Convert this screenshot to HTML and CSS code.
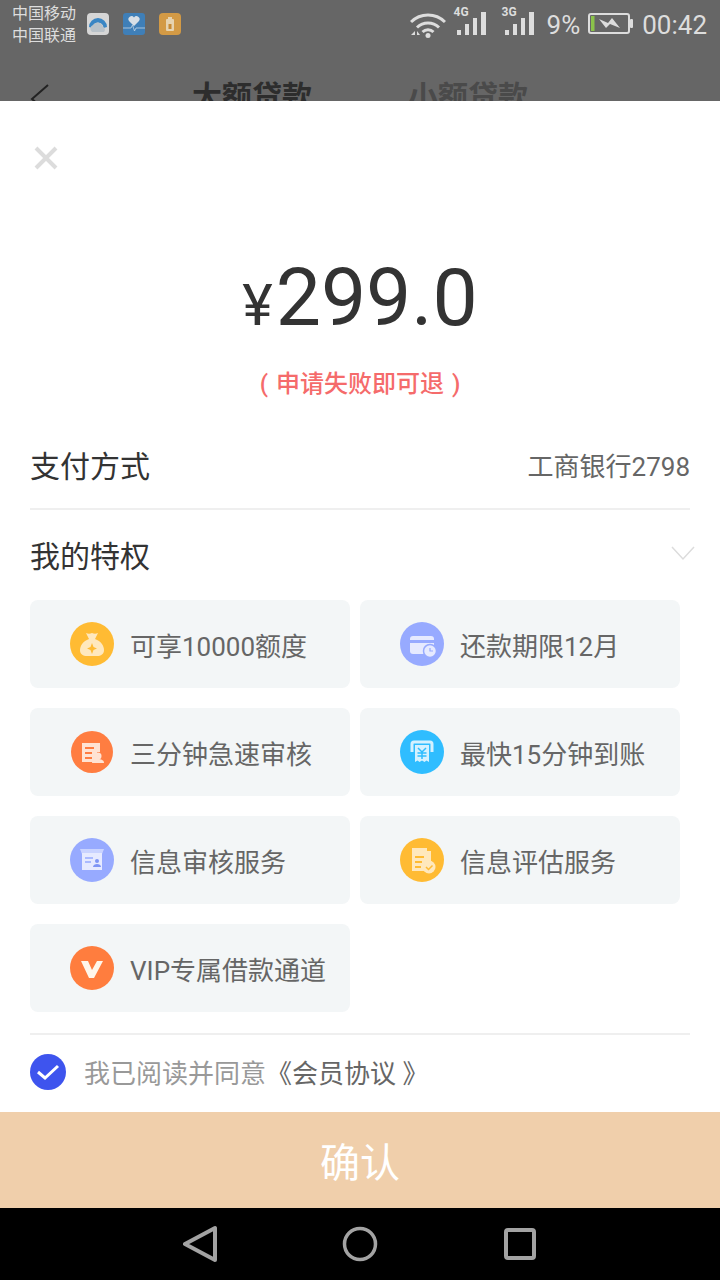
FILE: index.html
```html
<!DOCTYPE html>
<html>
<head>
<meta charset="utf-8">
<title>支付</title>
<link rel="stylesheet" href="styles.css">
</head>
<body>
<div class="container">

<header class="top">
  <div class="statusbar">
    <div class="carrier"><span>中国移动</span><span>中国联通</span></div>
    <div class="notify">
      <svg width="22" height="22" viewBox="0 0 22 22"><rect width="22" height="22" rx="4" fill="#d6d6d6"/><path d="M2 14a9 9 0 1 1 18 0l-3.500 1a5.500 5.500 0 1 0-11 0z" fill="#3a86c4"/><path d="M5 19a4 4 0 0 1 1-7 5.500 5.500 0 0 1 10 2 3 3 0 0 1 1 5z" fill="#b9c2c9"/></svg>
      <svg width="22" height="22" viewBox="0 0 22 22"><rect width="22" height="22" rx="3" fill="#3f7fb8"/><path d="M14 14L9 9a3 3 0 0 1 5-3.500A3 3 0 0 1 19 9z" fill="#d8dfe6" transform="translate(-3 -1)"/><path d="M0 15h8l1.500-3 2 6 1.500-3h9" fill="none" stroke="#c4d6e6" stroke-width="0.800"/></svg>
      <svg width="22" height="22" viewBox="0 0 22 22"><rect width="22" height="22" rx="4" fill="#d39a45"/><rect x="7" y="6" width="8" height="12" rx="1" fill="#e6d3b0"/><rect x="9" y="4" width="4" height="2" fill="#e6d3b0"/><rect x="9.500" y="11" width="3" height="5" fill="#c58a35"/></svg>
    </div>
    <div class="sysinfo">
      <svg class="wifi" width="36" height="26" viewBox="0 0 36 26" fill="none" stroke="#ddd" stroke-width="3"><path d="M1 10a24 24 0 0 1 34 0"/><path d="M7 15.500a16 16 0 0 1 22 0"/><path d="M12.500 20a8 8 0 0 1 11 0"/><circle cx="18" cy="23.500" r="2.500" fill="#ddd" stroke="none"/><path d="M1 23l4-4v4zM7 19l3 4h-3z" fill="#ddd" stroke="none"/></svg>
      <div class="signal"><small>4G</small><i class="b1"></i><i class="b2"></i><i class="b3"></i><i class="b4"></i></div>
      <div class="signal"><small>3G</small><i class="b1"></i><i class="b2"></i><i class="b3"></i><i class="b4"></i></div>
      <span class="pct">9%</span>
      <svg class="batt" width="45" height="21" viewBox="0 0 45 21"><rect x="1" y="1" width="40" height="19" rx="2" fill="none" stroke="#ddd" stroke-width="2"/><rect x="3" y="3" width="3.500" height="15" fill="#8bc34a"/><rect x="42" y="6" width="3" height="9" rx="1" fill="#ddd"/><path d="M11 6l9 4 4-5 8 10-10-4-4 4z" fill="#ddd"/></svg>
      <span class="clock">00:42</span>
    </div>
  </div>
  <div class="tabs">
    <svg class="back" width="20" height="40" viewBox="0 0 20 40"><path d="M18 1L2 15l16 14" fill="none" stroke="#222" stroke-width="2"/></svg>
    <span class="tab on">大额贷款</span>
    <span class="tab">小额贷款</span>
  </div>
</header>

<main class="sheet">
  <svg class="close" width="26" height="26" viewBox="0 0 26 26"><path d="M3 3l20 20M23 3L3 23" stroke="#dcdcdc" stroke-width="4" fill="none"/></svg>
  <div class="amount"><span class="yen">¥</span>299.0</div>
  <p class="refund">( 申请失败即可退 )</p>

  <div class="row pay">
    <span class="label">支付方式</span>
    <span class="value">工商银行2798</span>
  </div>
  <div class="row perks">
    <span class="label">我的特权</span>
    <svg width="24" height="15" viewBox="0 0 24 15"><path d="M1 1l11 12L23 1" fill="none" stroke="#dcdcdc" stroke-width="1.500"/></svg>
  </div>

  <div class="grid">
    <div class="card">
      <svg class="ico" viewBox="0 0 44 44"><circle cx="22" cy="22" r="22" fill="#ffbb33"/><path d="M16 11c2 1 4 1 6 0 2 1 4 1 6 0l-3 6c6 2 9 7 9 11 0 4-3 6-7 6H17c-4 0-7-2-7-6 0-4 3-9 9-11z" fill="#ffe8bd"/><path d="M22 21l1.500 4 3.500 1.500-3.500 1.500-1.500 4-1.500-4-3.500-1.500 3.500-1.500z" fill="#ffbb33"/></svg>
      <span>可享10000额度</span>
    </div>
    <div class="card">
      <svg class="ico" viewBox="0 0 44 44"><circle cx="22" cy="22" r="22" fill="#97aaff"/><rect x="10" y="14" width="24" height="18" rx="3" fill="#e6eaff"/><rect x="10" y="18" width="24" height="3" fill="#97aaff"/><circle cx="30" cy="29" r="6.500" fill="#e6eaff" stroke="#97aaff" stroke-width="1.500"/><path d="M30 26v3h3" fill="none" stroke="#97aaff" stroke-width="1.200"/></svg>
      <span>还款期限12月</span>
    </div>
    <div class="card">
      <svg class="ico" viewBox="0 0 44 44"><circle cx="22" cy="22" r="21" fill="#ff7d41"/><path d="M12 13h18v9h-3v10H12z" fill="#ffe3d3"/><path d="M15 18h9M15 23h7M15 28h7" stroke="#ff7d41" stroke-width="2"/><circle cx="28" cy="26" r="3.500" fill="#ffe3d3"/><path d="M22 33c0-3 3-4 6-4s6 1 6 4z" fill="#ffe3d3"/></svg>
      <span>三分钟急速审核</span>
    </div>
    <div class="card">
      <svg class="ico" viewBox="0 0 44 44"><circle cx="22" cy="22" r="22" fill="#2fbdff"/><path d="M12 22v-8a2 2 0 0 1 2-2h16a2 2 0 0 1 2 2v8" fill="none" stroke="#d5f1ff" stroke-width="3"/><path d="M15 15h14v17l-2.500-1.500-2 1.500-2.500-1.500-2.500 1.500-2-1.500-2.500 1.500z" fill="#d5f1ff"/><path d="M18 18l4 4 4-4M17.500 23h9M17.500 26h9M22 22v7" fill="none" stroke="#2fbdff" stroke-width="1.500"/></svg>
      <span>最快15分钟到账</span>
    </div>
    <div class="card">
      <svg class="ico" viewBox="0 0 44 44"><circle cx="22" cy="22" r="22" fill="#97aaff"/><path d="M10 11h24l-2 5H12z" fill="#c9d3ff"/><rect x="12" y="15" width="20" height="17" fill="#e6eaff"/><path d="M15 20h8M15 24h6" stroke="#97aaff" stroke-width="1.500"/><circle cx="27" cy="23" r="2" fill="#7f95f5"/><path d="M23 29c0-2 2-3 4-3s4 1 4 3z" fill="#7f95f5"/></svg>
      <span>信息审核服务</span>
    </div>
    <div class="card">
      <svg class="ico" viewBox="0 0 44 44"><circle cx="22" cy="22" r="22" fill="#ffbb33"/><path d="M12 10h15v3h4v10a7 7 0 0 0-6 10H12z" fill="#ffe8bd"/><path d="M15 19h9M15 24h7M15 29h6" stroke="#ffbb33" stroke-width="2"/><circle cx="29" cy="29" r="6.500" fill="#ffe8bd"/><path d="M26 29l2.500 2.500 4-4" fill="none" stroke="#ffbb33" stroke-width="1.500"/></svg>
      <span>信息评估服务</span>
    </div>
    <div class="card">
      <svg class="ico" viewBox="0 0 44 44"><circle cx="22" cy="22" r="22" fill="#ff7d3e"/><path d="M11 15h7l4 9 5-9h6L24 32h-5z" fill="#fff6ea"/></svg>
      <span>VIP专属借款通道</span>
    </div>
  </div>

  <div class="agree">
    <svg width="36" height="36" viewBox="0 0 36 36"><circle cx="18" cy="18" r="18" fill="#3e54ee"/><path d="M8 18l7 6 13-12" fill="none" stroke="#fff" stroke-width="3"/></svg>
    <span>我已阅读并同意<em>《会员协议 》</em></span>
  </div>
</main>

<button class="confirm">确认</button>

<nav class="navbar">
  <svg width="36" height="40" viewBox="0 0 36 40"><path d="M32 4v32L2 20z" fill="none" stroke="#a3a3a3" stroke-width="4" stroke-linejoin="round"/></svg>
  <svg width="36" height="36" viewBox="0 0 36 36"><circle cx="18" cy="18" r="15.500" fill="none" stroke="#a3a3a3" stroke-width="3.500"/></svg>
  <svg class="recent" width="32" height="32" viewBox="0 0 32 32"><rect x="2" y="2" width="28" height="28" rx="2" fill="none" stroke="#a3a3a3" stroke-width="4"/></svg>
</nav>

</div>
</body>
</html>
```

FILE: styles.css
```css
* {
	box-sizing: border-box;
}
body {
	margin: 0;
	font-family: Roboto, "Noto Sans CJK SC", sans-serif;
}
.container {
	width: 720px;
	height: 1280px;
	display: flex;
	flex-direction: column;
	overflow: hidden;
	background: #fff;
}

/* dimmed page behind the sheet */
.top {
	height: 101px;
	flex: none;
	overflow: hidden;
	background: #666;
}
.statusbar {
	height: 50px;
	display: flex;
	align-items: center;
	padding: 0 13px 0 12px;
	color: #ddd;
}
.carrier {
	display: flex;
	flex-direction: column;
	font-size: 16px;
	line-height: 22px;
	width: 75px;
}
.notify {
	display: flex;
	gap: 14px;
	margin-top: -2px;
}
.sysinfo {
	margin-left: auto;
	display: flex;
	align-items: center;
}
.signal {
	position: relative;
	width: 29px;
	height: 27px;
	margin: -7px 0 0 11px;
	display: flex;
	align-items: flex-end;
	gap: 4px;
}
.signal + .signal {
	margin-left: 19px;
}
.signal small {
	position: absolute;
	left: -3px;
	top: -3px;
	font-size: 12px;
	font-weight: 700;
}
.signal i {
	width: 4.25px;
	background: #ddd;
}
.b1 { height: 5px; }
.b2 { height: 11px; }
.b3 { height: 17px; }
.b4 { height: 23px; }
.pct {
	font-size: 26px;
	margin-left: 13px;
}
.batt {
	margin: -3px 0 0 8px;
}
.clock {
	font-size: 26px;
	margin-left: 9px;
}
.tabs {
	display: flex;
	align-items: flex-start;
	padding: 27px 0 0 30px;
}
.back {
	margin-top: 7px;
}
.tab {
	font-size: 30px;
	line-height: 40px;
	font-weight: 700;
	color: #2d2d2d;
	margin-left: 142px;
}
.tab + .tab {
	margin-left: 96px;
	color: #4a4a4a;
}

.sheet {
	flex: 1;
	padding: 0 30px;
	min-height: 0;
}
.close {
	display: block;
	margin: 44px 0 0 3px;
}
.amount {
	margin-top: 77px;
	text-align: center;
	font-size: 80.5px;
	line-height: 100px;
	color: #333;
}
.yen {
	font-size: 58px;
	margin-right: 3px;
}
.refund {
	margin: 11px 0 0;
	text-align: center;
	font-size: 24px;
	line-height: 36px;
	font-weight: 500;
	word-spacing: 2px;
	color: #f56b6b;
}
.row {
	display: flex;
	justify-content: space-between;
	align-items: center;
}
.label {
	font-size: 30px;
	color: #333;
}
.pay {
	margin-top: 16px;
	height: 92px;
	padding-top: 2px;
	border-bottom: 2px solid #efefef;
}
.value {
	font-size: 26px;
	color: #666;
}
.perks {
	height: 90px;
	padding-bottom: 3px;
}
.perks svg {
	margin-right: -5px;
}
.grid {
	display: grid;
	grid-template-columns: 320px 320px;
	grid-auto-rows: 88px;
	gap: 20px 10px;
}
.card {
	display: flex;
	align-items: center;
	gap: 16px;
	padding-left: 40px;
	background: #f3f6f7;
	border-radius: 8px;
	font-size: 26px;
	color: #666;
}
.ico {
	width: 44px;
	height: 44px;
	flex: none;
}
.agree {
	margin-top: 21px;
	height: 79px;
	padding-bottom: 4px;
	border-top: 2px solid #efefef;
	display: flex;
	align-items: center;
	gap: 18px;
	font-size: 26px;
	color: #999;
}
.agree em {
	font-style: normal;
	color: #666;
}
.confirm {
	flex: none;
	height: 96px;
	border: 0;
	padding: 0;
	background: #f0cfab;
	color: #fff;
	font: inherit;
	font-size: 40px;
}
.navbar {
	flex: none;
	height: 72px;
	background: #000;
	display: flex;
	align-items: center;
	gap: 123px;
	padding-left: 183px;
}
.recent {
	margin-left: 3px;
}
```
